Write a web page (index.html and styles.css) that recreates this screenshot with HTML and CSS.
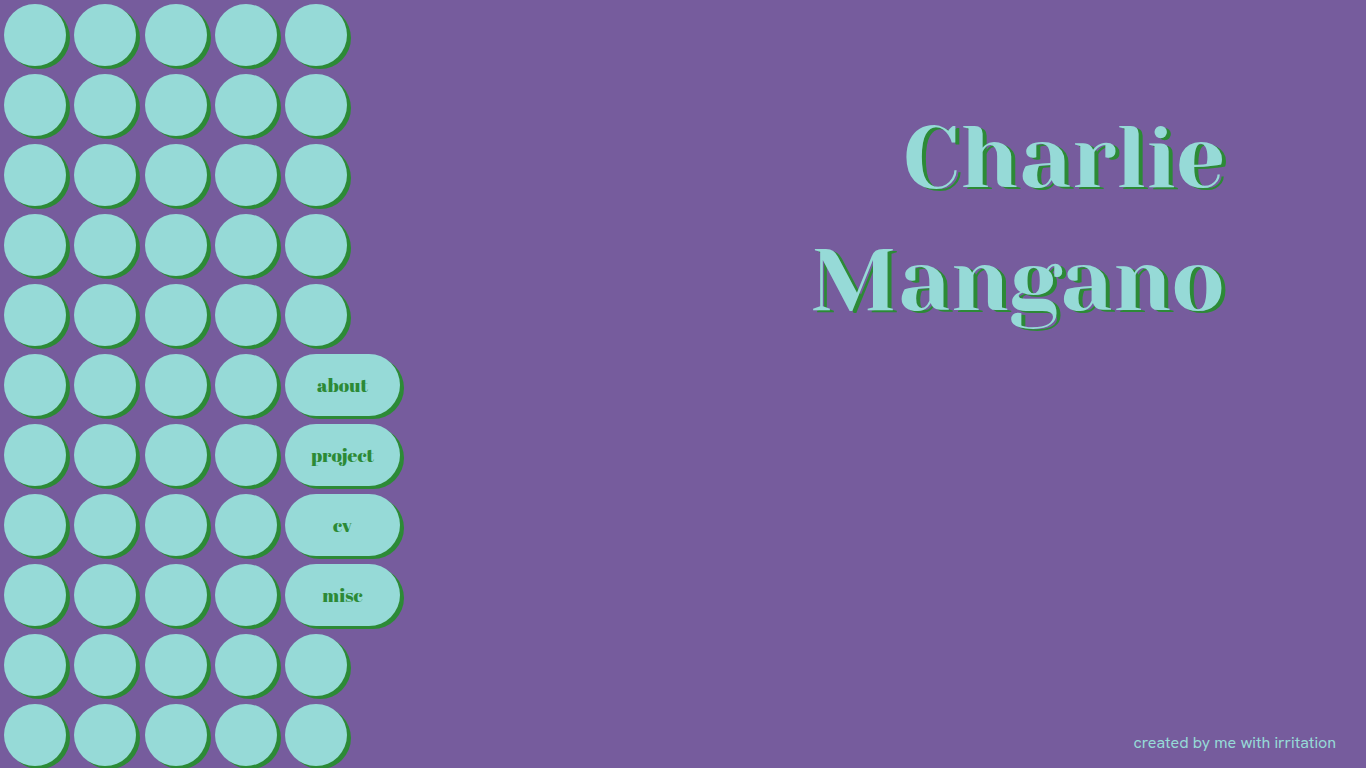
FILE: index.html
```html
<!DOCTYPE html>
<html lang="en">
<head>
<meta charset="utf-8">
<meta name="viewport" content="width=device-width, initial-scale=1">
<title>Charlie Mangano</title>
<link rel="stylesheet" href="styles.css">
</head>
<body class="page">
<nav class="dots" aria-label="Main">
<span class="dot"></span><span class="dot"></span><span class="dot"></span><span class="dot"></span><span class="dot"></span>
<span class="dot"></span><span class="dot"></span><span class="dot"></span><span class="dot"></span><span class="dot"></span>
<span class="dot"></span><span class="dot"></span><span class="dot"></span><span class="dot"></span><span class="dot"></span>
<span class="dot"></span><span class="dot"></span><span class="dot"></span><span class="dot"></span><span class="dot"></span>
<span class="dot"></span><span class="dot"></span><span class="dot"></span><span class="dot"></span><span class="dot"></span>
<span class="dot"></span><span class="dot"></span><span class="dot"></span><span class="dot"></span><a class="dot link" href="#about">about</a>
<span class="dot"></span><span class="dot"></span><span class="dot"></span><span class="dot"></span><a class="dot link" href="#project">project</a>
<span class="dot"></span><span class="dot"></span><span class="dot"></span><span class="dot"></span><a class="dot link" href="#cv">cv</a>
<span class="dot"></span><span class="dot"></span><span class="dot"></span><span class="dot"></span><a class="dot link" href="#misc">misc</a>
<span class="dot"></span><span class="dot"></span><span class="dot"></span><span class="dot"></span><span class="dot"></span>
<span class="dot"></span><span class="dot"></span><span class="dot"></span><span class="dot"></span><span class="dot"></span>
</nav>
<div class="content">
<main class="intro">
<h1 class="name">Charlie<br>Mangano</h1>
</main>
<footer class="credit">created by me with irritation</footer>
</div>
</body>
</html>
```
FILE: styles.css
```css
:root {
  --purple: #765c9d;
  --mint: #96dad7;
  --green: #2c8a36;
}

.page {
  box-sizing: border-box;
  display: flex;
  min-height: 100vh;
  margin: 0;
  background: var(--purple);
  color: var(--mint);
}

.dots {
  display: grid;
  flex: none;
  grid-template-columns: repeat(5, 62px);
  grid-auto-rows: 62px;
  justify-content: space-between;
  align-content: start;
  row-gap: 8px;
  width: 343px;
  padding: 4px 4px 2px;
}

.dot {
  border-radius: 31px;
  background: var(--mint);
  box-shadow: 4px 3px 0 var(--green);
}

.link {
  display: flex;
  align-items: center;
  justify-content: center;
  width: 115px;
  color: var(--green);
  font: normal 19px/24px "Abril Fatface", "Liberation Serif", serif;
  text-decoration: none;
}

.content {
  display: flex;
  flex: 1;
  flex-direction: column;
  justify-content: space-between;
  text-align: right;
}

.intro {
  padding: 96px 141px 0 0;
}

.name {
  margin: 0;
  font: normal 88px/123px "Yeseva One", "Liberation Serif", serif;
  text-shadow: 4px 2px 0 var(--green);
}

.credit {
  padding: 0 30px 14px 0;
  font: 16px/22px "HK Grotesk", "Hanken Grotesk", "Work Sans", Inter, sans-serif;
}
```
